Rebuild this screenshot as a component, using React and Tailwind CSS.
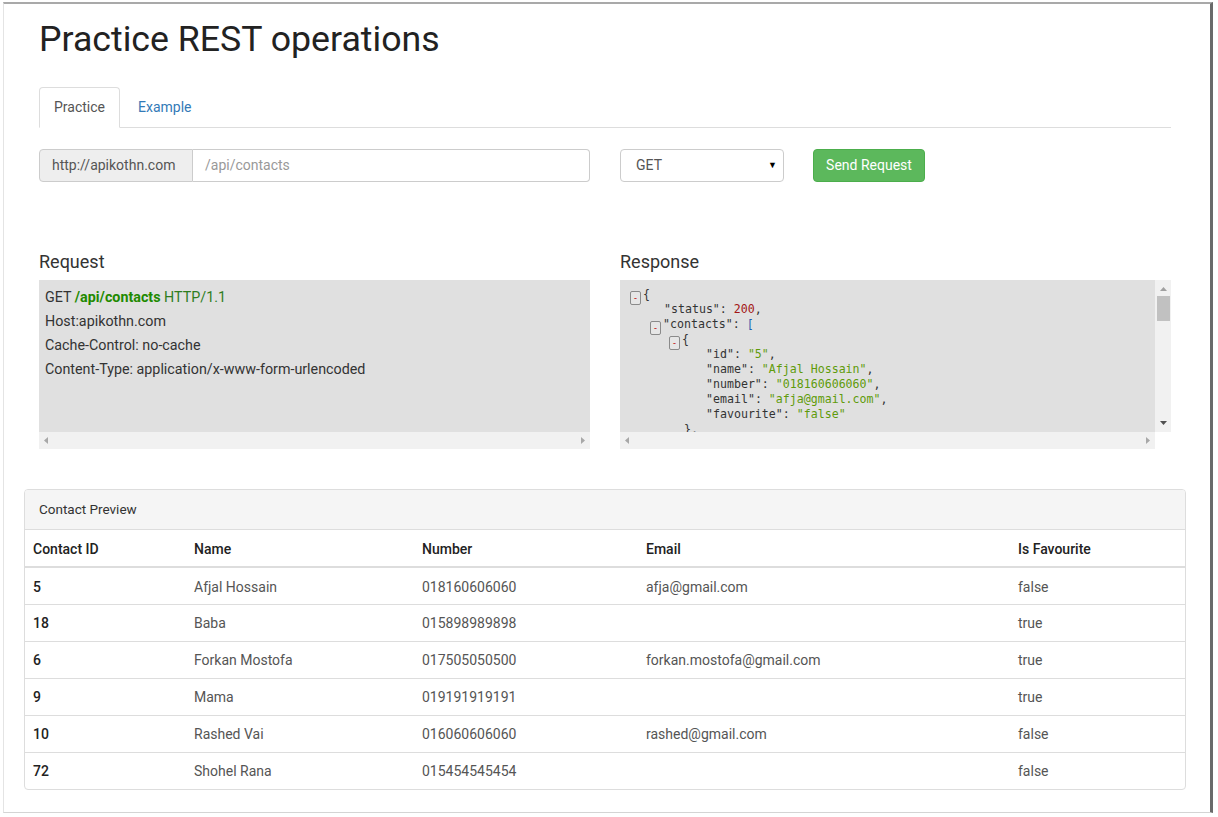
import React from "react";

const KEY = "#333333";
const STR = "#5f9b0a";
const NUM = "#a31515";
const PUN = "#333333";
const BLU = "#1f5fb0";

function Toggle() {
  return (
    <span className="inline-flex items-end justify-center w-[11px] h-[14px] mr-[2px] align-[-3px] border border-[#8a8a8a] rounded-[2px] bg-[#e6e6e6] text-[#c00000] text-[9px] leading-[9px] pb-[1px]">
      -
    </span>
  );
}

const jsonLines = [
  { x: 10, t: true, p: [["{", PUN]] },
  { x: 44, p: [['"status"', KEY], [": ", PUN], ["200", NUM], [",", PUN]] },
  { x: 30, t: true, p: [['"contacts"', KEY], [": ", PUN], ["[", BLU]] },
  { x: 49, t: true, p: [["{", PUN]] },
  { x: 86, p: [['"id"', KEY], [": ", PUN], ['"5"', STR], [",", PUN]] },
  { x: 86, p: [['"name"', KEY], [": ", PUN], ['"Afjal Hossain"', STR], [",", PUN]] },
  { x: 86, p: [['"number"', KEY], [": ", PUN], ['"018160606060"', STR], [",", PUN]] },
  { x: 86, p: [['"email"', KEY], [": ", PUN], ['"afja@gmail.com"', STR], [",", PUN]] },
  { x: 86, p: [['"favourite"', KEY], [": ", PUN], ['"false"', STR]] },
  { x: 64, p: [["},", PUN]] },
];

const rows = [
  ["5", "Afjal Hossain", "018160606060", "afja@gmail.com", "false"],
  ["18", "Baba", "015898989898", "", "true"],
  ["6", "Forkan Mostofa", "017505050500", "forkan.mostofa@gmail.com", "true"],
  ["9", "Mama", "019191919191", "", "true"],
  ["10", "Rashed Vai", "016060606060", "rashed@gmail.com", "false"],
  ["72", "Shohel Rana", "015454545454", "", "false"],
];

function ArrowL({ c = "#a8a8a8" }) {
  return (
    <svg width="4" height="7" viewBox="0 0 4 7"><polygon points="4,0 4,7 0,3.5" fill={c} /></svg>
  );
}
function ArrowR({ c = "#a8a8a8" }) {
  return (
    <svg width="4" height="7" viewBox="0 0 4 7"><polygon points="0,0 0,7 4,3.5" fill={c} /></svg>
  );
}
function ArrowU({ c = "#a0a0a0" }) {
  return (
    <svg width="7" height="4" viewBox="0 0 7 4"><polygon points="0,4 7,4 3.5,0" fill={c} /></svg>
  );
}
function ArrowD({ c = "#505050" }) {
  return (
    <svg width="7" height="4" viewBox="0 0 7 4"><polygon points="0,0 7,0 3.5,4" fill={c} /></svg>
  );
}

function HScroll({ w }) {
  return (
    <div className={`h-[17px] bg-[#f1f1f1] flex items-center justify-between px-[5px] ${w}`}>
      <ArrowL />
      <ArrowR />
    </div>
  );
}

export default function App() {
  return (
    <div className="w-[1218px] h-[817px] bg-white overflow-hidden pt-[2px] font-[family-name:Roboto,sans-serif]">
      <div className="ml-[3px] w-[1210px] h-[811px] border-t-[2px] border-t-[#a9a9a9] border-l border-l-[#e4e4e4] border-r-[3px] border-r-[#6a6a6a] border-b border-b-[#d4d4d4] bg-white">
        {/* container */}
        <div className="pl-[35px] w-[1167px]">
          <h1 className="mt-[15px] h-[40px] leading-[40px] text-[35.7px] text-[#222] font-normal">
            Practice REST operations
          </h1>

          {/* tabs */}
          <div className="mt-[28px] h-[41px] border-b border-[#dddddd] flex">
            <div className="h-[41px] px-[14px] border border-[#dddddd] border-b-white rounded-t-[4px] bg-white flex items-center text-[14px] text-[#555]">
              Practice
            </div>
            <div className="ml-[2px] h-[40px] px-[16px] flex items-center text-[14px] text-[#337ab7]">
              Example
            </div>
          </div>

          {/* form row */}
          <div className="mt-[21px] flex h-[33px]">
            <div className="flex w-[551px] h-[33px]">
              <div className="w-[154px] h-[33px] bg-[#eeeeee] border border-[#cccccc] rounded-l-[4px] flex items-center pl-[12px] text-[14px] text-[#555]">
                http://apikothn.com
              </div>
              <div className="flex-1 h-[33px] border border-l-0 border-[#cccccc] rounded-r-[4px] flex items-center pl-[12px] text-[14px] text-[#999]">
                /api/contacts
              </div>
            </div>
            <div className="ml-[30px] w-[164px] h-[33px] border border-[#cccccc] rounded-[4px] flex items-center justify-between pl-[15px] pr-[6px] text-[14px] text-[#555]">
              <span>GET</span>
              <span className="text-[9px] text-black">▼</span>
            </div>
            <div className="ml-[29px] w-[112px] h-[33px] bg-[#5cb85c] border border-[#4cae4c] rounded-[4px] flex items-center justify-center text-[14px] text-white">
              Send Request
            </div>
          </div>

          {/* request / response */}
          <div className="mt-[68px] flex">
            <div className="w-[551px]">
              <div className="h-[24px] leading-[24px] text-[18px] text-[#333] mb-[6px]">Request</div>
              <div className="h-[152px] bg-[#e0e0e0] pt-[5px] pl-[6px] text-[14.3px] leading-[24px] text-[#333]">
                <div>
                  GET <span className="font-bold text-[#1f8a00]">/api/contacts</span>{" "}
                  <span className="text-[#2e7d1e]">HTTP/1.1</span>
                </div>
                <div>Host:apikothn.com</div>
                <div>Cache-Control: no-cache</div>
                <div>Content-Type: application/x-www-form-urlencoded</div>
              </div>
              <HScroll w="w-[551px]" />
            </div>

            <div className="ml-[30px] w-[551px]">
              <div className="h-[24px] leading-[24px] text-[18px] text-[#333] mb-[6px]">Response</div>
              <div className="flex h-[152px]">
                <div className="w-[535px] h-[152px] bg-[#e0e0e0] pt-[7px] overflow-hidden font-[family-name:'DejaVu_Sans_Mono',monospace] text-[11.6px] leading-[15px] whitespace-pre">
                  {jsonLines.map((l, i) => (
                    <div key={i} style={{ paddingLeft: l.x }} className="h-[15px]">
                      {l.t && <Toggle />}
                      {l.p.map((s, j) => (
                        <span key={j} style={{ color: s[1] }}>{s[0]}</span>
                      ))}
                    </div>
                  ))}
                </div>
                <div className="w-[16px] h-[152px] bg-[#f1f1f1] flex flex-col items-center">
                  <div className="mt-[7px]"><ArrowU /></div>
                  <div className="mt-[5px] w-[13px] h-[25px] bg-[#c1c1c1]" />
                  <div className="mt-auto mb-[7px]"><ArrowD /></div>
                </div>
              </div>
              <div className="flex">
                <HScroll w="w-[535px]" />
              </div>
            </div>
          </div>
        </div>

        {/* panel */}
        <div className="mt-[40px] ml-[20px] w-[1162px] border border-[#dddddd] rounded-[4px] overflow-hidden">
          <div className="h-[40px] bg-[#f5f5f5] border-b border-[#dddddd] flex items-center pl-[14px] text-[13.5px] text-[#333]">
            Contact Preview
          </div>
          <table className="w-full border-collapse text-[14px]">
            <thead>
              <tr className="border-b-2 border-[#dddddd] text-left text-[#222]">
                <th className="w-[161px] px-[8px] pt-[9px] pb-[7px] leading-[20px] font-medium">Contact ID</th>
                <th className="w-[228px] px-[8px] pt-[9px] pb-[7px] leading-[20px] font-medium">Name</th>
                <th className="w-[224px] px-[8px] pt-[9px] pb-[7px] leading-[20px] font-medium">Number</th>
                <th className="w-[372px] px-[8px] pt-[9px] pb-[7px] leading-[20px] font-medium">Email</th>
                <th className="px-[8px] pt-[9px] pb-[7px] leading-[20px] font-medium">Is Favourite</th>
              </tr>
            </thead>
            <tbody>
              {rows.map((r, i) => (
                <tr key={i} className={i > 0 ? "border-t border-[#dddddd]" : ""}>
                  <td className={`px-[8px] leading-[20px] text-[#222] font-medium ${i === 0 ? "pt-[9px] pb-[7px]" : "py-[8px]"}`}>{r[0]}</td>
                  <td className={`px-[8px] leading-[20px] text-[#555] ${i === 0 ? "pt-[9px] pb-[7px]" : "py-[8px]"}`}>{r[1]}</td>
                  <td className={`px-[8px] leading-[20px] text-[#555] ${i === 0 ? "pt-[9px] pb-[7px]" : "py-[8px]"}`}>{r[2]}</td>
                  <td className={`px-[8px] leading-[20px] text-[#555] ${i === 0 ? "pt-[9px] pb-[7px]" : "py-[8px]"}`}>{r[3]}</td>
                  <td className={`px-[8px] leading-[20px] text-[#555] ${i === 0 ? "pt-[9px] pb-[7px]" : "py-[8px]"}`}>{r[4]}</td>
                </tr>
              ))}
            </tbody>
          </table>
        </div>
      </div>
    </div>
  );
}
